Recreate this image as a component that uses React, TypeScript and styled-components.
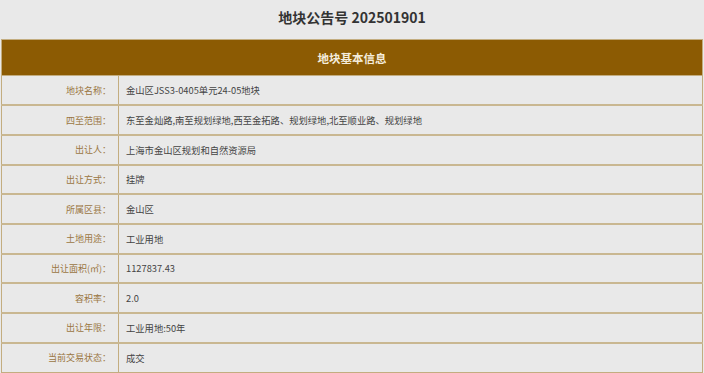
import React from 'react';
import styled, { createGlobalStyle } from 'styled-components';

const GlobalStyle = createGlobalStyle`
  html, body {
    margin: 0;
    padding: 0;
    background: #e9e9e9;
    font-family: "Noto Sans CJK SC", "Noto Sans", sans-serif;
  }
`;

const Page = styled.div`
  width: 704px;
  height: 373px;
  overflow: hidden;
  padding: 0 1px;
  box-sizing: border-box;
`;

const Heading = styled.h1`
  margin: 0;
  height: 39px;
  line-height: 35px;
  text-align: center;
  font-size: 14px;
  font-weight: 700;
  color: #333;
`;

const Table = styled.table`
  width: 100%;
  border-collapse: collapse;
  table-layout: fixed;
  border: 1px solid #c3ad80;
`;

const LabelCol = styled.col`
  width: 117px;
`;

const HeaderCell = styled.th`
  height: 35px;
  padding: 0;
  background: #8c5b03;
  color: #f4ecdc;
  font-size: 11.5px;
  font-weight: 700;
  text-align: center;
  border-bottom: 1px solid #c3ad80;
`;

const Row = styled.tr`
  height: 29.7px;
  & + & td {
    border-top: 2px solid #c9b791;
  }
`;

const Label = styled.td`
  padding: 0 7px 0 0;
  text-align: right;
  font-size: 9px;
  color: #9a7642;
  border-right: 1px solid #c3ad80;
  white-space: nowrap;
`;

const Value = styled.td`
  padding: 0 0 0 7px;
  font-size: 9.3px;
  color: #444;
  white-space: nowrap;
`;

const rows: [string, string][] = [
  ['地块名称：', '金山区JSS3-0405单元24-05地块'],
  ['四至范围：', '东至金灿路,南至规划绿地,西至金拓路、规划绿地,北至顺业路、规划绿地'],
  ['出让人：', '上海市金山区规划和自然资源局'],
  ['出让方式：', '挂牌'],
  ['所属区县：', '金山区'],
  ['土地用途：', '工业用地'],
  ['出让面积(㎡)：', '1127837.43'],
  ['容积率：', '2.0'],
  ['出让年限：', '工业用地:50年'],
  ['当前交易状态：', '成交'],
];

const App: React.FC = () => {
  return (
    <Page>
      <GlobalStyle />
      <Heading>地块公告号 202501901</Heading>
      <Table>
        <colgroup>
          <LabelCol />
          <col />
        </colgroup>
        <thead>
          <tr>
            <HeaderCell colSpan={2}>地块基本信息</HeaderCell>
          </tr>
        </thead>
        <tbody>
          {rows.map(([label, value]) => (
            <Row key={label}>
              <Label>{label}</Label>
              <Value>{value}</Value>
            </Row>
          ))}
        </tbody>
      </Table>
    </Page>
  );
};

export default App;
